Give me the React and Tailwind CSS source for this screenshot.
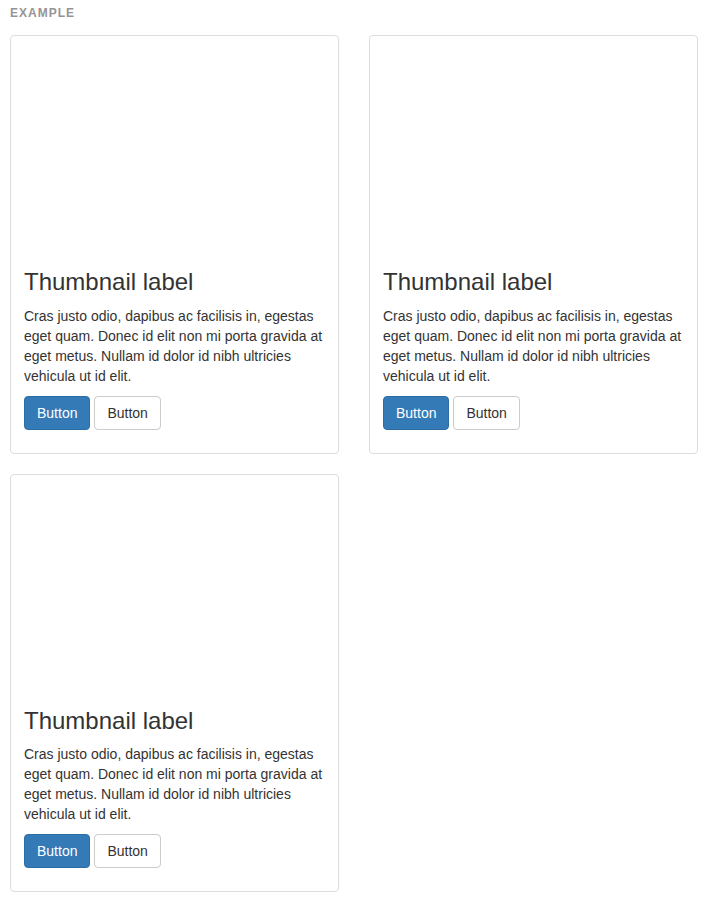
import React from "react";

function Card() {
  return (
    <div className="rounded-[4px] border border-[#ddd] bg-white p-[4px]">
      <div className="h-[200px]" />
      <div className="p-[9px] text-[#333]">
        <h3 className="mt-[20px] mb-[10px] text-[24px] leading-[1.1] font-medium">Thumbnail label</h3>
        <p className="mb-[10px] text-[14px] leading-[20px]">
          Cras justo odio, dapibus ac facilisis in, egestas eget quam. Donec id elit non mi porta gravida at eget metus. Nullam id dolor id nibh ultricies vehicula ut id elit.
        </p>
        <p className="mb-[10px] text-[14px] leading-[20px]">
          <a className="inline-block rounded-[4px] border border-[#2e6da4] bg-[#337ab7] px-[12px] py-[6px] text-[14px] leading-[20px] text-white">Button</a>{" "}
          <a className="inline-block rounded-[4px] border border-[#ccc] bg-white px-[12px] py-[6px] text-[14px] leading-[20px] text-[#333]">Button</a>
        </p>
      </div>
    </div>
  );
}

export default function App() {
  return (
    <div className="min-h-[910px] bg-white px-[10px] font-['Liberation_Sans',Arial,sans-serif]">
      <div className="pt-[6px] mb-[15.4px] text-[12px] leading-[14px] font-bold uppercase tracking-[1px] text-[#959595]">Example</div>
      <div className="grid grid-cols-[329px_329px] gap-x-[30px] gap-y-[20px]">
        <Card />
        <Card />
        <Card />
      </div>
    </div>
  );
}
